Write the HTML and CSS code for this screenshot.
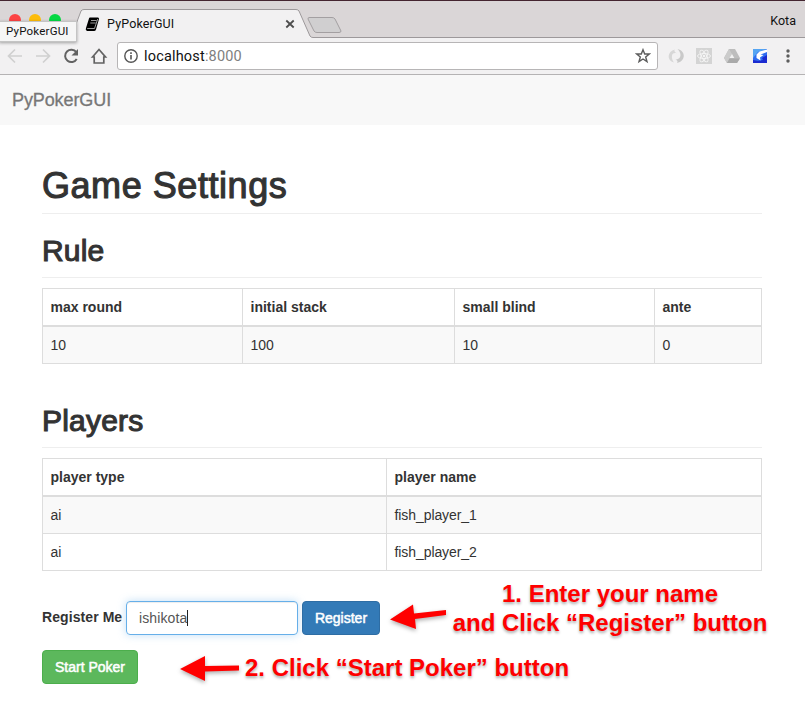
FILE: index.html
```html
<!DOCTYPE html>
<html lang="en">
<head>
<meta charset="utf-8">
<title>PyPokerGUI</title>
<link rel="stylesheet" href="styles.css">
</head>
<body>
<header class="browser">
  <div class="tabstrip">
    <svg class="tabshape" width="805" height="38" viewBox="0 0 805 38">
      <circle cx="15" cy="20" r="6" fill="#fc4344"/><circle cx="35" cy="20" r="6" fill="#fdbc0a"/><circle cx="55" cy="20" r="6" fill="#05d843"/>
      <path d="M0 37.5H71L81 11Q82 9.5 84 9.5H296Q298 9.5 299 11L310 36Q311 37.5 313 37.5H805V39H0Z" fill="#f2f1f2" stroke="#9d999b"/>
      <path d="M309 17.500H332Q334 17.500 335 19L341 31Q341 32.500 339 32.500H317Q315 32.500 314 31L308 19Q308 17.500 309 17.500Z" fill="#d0cfd0" stroke="#a39fa1"/>
      <g transform="translate(85 17)"><path d="M5 .5H13Q14 .5 14 2L11 12.500Q10.500 14 9 14H2Q0 13 1 11L4 1.500Q4.200.5 5 .5Z" fill="#000"/><path d="M6 3.500H11.500M5.300 6H10.700M2.200 11.500H9.500L12.700 2" stroke="#ddd" stroke-width=".7" fill="none"/></g>
      <path d="M286.300 20.500L293.700 27.500M293.700 20.500L286.300 27.500" stroke="#4d4d4d" stroke-width="1.800"/>
    </svg>
    <span class="tab-title">PyPokerGUI</span>
    <span class="profile">Kota</span>
    <span class="tooltip">PyPokerGUI</span>
  </div>
  <div class="toolbar">
    <svg class="nav-icons" width="117" height="36" viewBox="0 38 117 36" fill="none">
      <path d="M22 56H9M15 49.500L8.500 56L15 62.500M36 56H49M43 49.500L49.500 56L43 62.500" stroke="#d0d0d0" stroke-width="1.700"/>
      <path d="M76.300 52.200A6.200 6.200 0 1 0 76.700 59" stroke="#626262" stroke-width="2"/><path d="M78 49V55.500H71.500Z" fill="#626262"/>
      <path d="M92.500 57L99 49.500L105.500 57H103.800V63H94.200V57Z" stroke="#626262" stroke-width="1.700"/>
    </svg>
    <div class="address">
      <svg width="14" height="14" viewBox="0 0 14 14" fill="none"><circle cx="7" cy="7" r="6.200" stroke="#555" stroke-width="1.400"/><path d="M7 6V10.500M7 3.300V5" stroke="#555" stroke-width="1.600"/></svg>
      <span class="url">localhost<span class="port">:8000</span></span>
      <svg class="star" width="16" height="16" viewBox="0 0 16 16"><path d="M8 1.700L9.700 6H14.300L10.700 9L12 13.700L8 11L4 13.700L5.300 9L1.700 6H6.300Z" fill="none" stroke="#5d5d5d" stroke-width="1.400"/></svg>
    </div>
    <svg class="extensions" width="147" height="36" viewBox="658 38 147 36" fill="none">
      <path d="M675 49.500C667 51 666.500 61 674 62.500C672.500 60.500 671.500 58 672 55.500C672.500 53 675 52.500 677 53.500C674 51.500 674 50.500 675 49.500Z" fill="#d7d7d7"/><path d="M677.500 49C686 51 686 61 677 63C678 61.500 677.500 60.500 675.500 59.500C678 59.500 680.500 58 680.500 55C680.500 52.500 679 50.500 677.500 49Z" fill="#c9c9c9"/>
      <path d="M696 48H712V64H696Z" fill="#d4d4d4"/><g stroke="#f5f5f5" stroke-width=".9"><ellipse cx="704" cy="56" rx="6.500" ry="2.500"/><ellipse cx="704" cy="56" rx="6.500" ry="2.500" transform="rotate(60 704 56)"/><ellipse cx="704" cy="56" rx="6.500" ry="2.500" transform="rotate(120 704 56)"/></g><circle cx="704" cy="56" r="1.200" fill="#f5f5f5"/>
      <path d="M729 49H735L740 58L737 63H727L724 58Z" fill="#bdbdbd"/><path d="M729 49L732 54L727 63L724 58Z" fill="#cbcbcb"/><path d="M729.500 58L732 54L734.300 58Z" fill="#f2f2f2"/><path d="M729.500 58.500H740L737 63H727Z" fill="#aaa"/>
      <path d="M753 49H767V63H753Z" fill="#2f6cf0"/><path d="M753 49H767L758 52L753 58Z" fill="#55a5f2"/><path d="M753 60L758 61L763 60L762 58L767 55V63H753Z" fill="#1b2bd0"/><path d="M767 49.500L759.500 51.500L756.500 54.500V58L760.500 60.500L760 57.500L763.500 55L760.500 54.500L767 52Z" fill="#fff"/>
      <g fill="#5d5d5d"><circle cx="788" cy="51" r="1.700"/><circle cx="788" cy="56" r="1.700"/><circle cx="788" cy="61" r="1.700"/></g>
    </svg>
  </div>
</header>
<nav class="navbar"><span class="brand">PyPokerGUI</span></nav>
<main class="container">
  <h1><span>Game Settings</span></h1>
  <section>
    <h2><span>Rule</span></h2>
    <table class="rules">
      <colgroup><col class="c1"><col class="c2"><col class="c3"><col></colgroup>
      <thead><tr><th>max round</th><th>initial stack</th><th>small blind</th><th>ante</th></tr></thead>
      <tbody><tr><td>10</td><td>100</td><td>10</td><td>0</td></tr></tbody>
    </table>
  </section>
  <section class="players">
    <h2><span>Players</span></h2>
    <table>
      <colgroup><col class="p1"><col></colgroup>
      <thead><tr><th>player type</th><th>player name</th></tr></thead>
      <tbody><tr><td>ai</td><td>fish_player_1</td></tr><tr><td>ai</td><td>fish_player_2</td></tr></tbody>
    </table>
  </section>
  <form class="register">
    <label>Register Me</label>
    <div class="field"><span>ishikota</span><i class="caret"></i></div>
    <button type="button" class="btn primary">Register</button>
  </form>
  <button type="button" class="btn success">Start Poker</button>
</main>
<svg class="arrows" width="280" height="110" viewBox="170 590 280 110" fill="#f00">
  <path d="M390 619.500L413 604.500L414 613.500L446 610V615L415 619L416 629Z"/>
  <path d="M180 669L205 656V666L239 665.500V670.500L205 671.500V681Z"/>
</svg>
<div class="note note-one">1. Enter your name<br>and Click “Register” button</div>
<div class="note note-two">2. Click “Start Poker” button</div>
</body>
</html>
```
FILE: styles.css
```css
* { box-sizing: border-box; }
body { margin: 0; width: 805px; height: 723px; overflow: hidden; position: relative; background: #fff; color: #333; font: 14px/20px "Liberation Sans", Arial, sans-serif; }
.browser { height: 75px; background: #f2f1f2; border-bottom: 1px solid #b5b3b4; }
.tabstrip { position: relative; height: 38px; display: flex; justify-content: space-between; padding: 0 9px 0 107px; border-top: 1px solid #442530; background: #dad6d7; color: #111; font: 12.5px/16px Roboto, sans-serif; }
.tabshape { position: absolute; left: 0; top: -1px; }
.tab-title { position: relative; margin-top: 15px; letter-spacing: .15px; }
.profile { position: relative; margin-top: 12px; }
.tooltip { position: absolute; left: -1px; top: 20px; width: 78px; height: 21px; padding-left: 6px; border: 1px solid #c4c4c4; background: #f6f6f6; box-shadow: 0 1px 3px #0005; font-size: 11.5px; line-height: 19px; z-index: 2; letter-spacing: .2px; }
.toolbar { height: 36px; display: flex; align-items: center; }
.address { width: 541px; height: 28px; display: flex; align-items: center; padding: 0 6px; border: 1px solid #b7b5b6; border-radius: 3px; background: #fff; }
.url { margin: 1px 0 0 6px; color: #111; font: 14.5px/20px Roboto, sans-serif; letter-spacing: .18px; }
.port { color: #808080; }
.star { margin-left: auto; }
.navbar { height: 50px; padding: 15px 12px; background: #f8f8f8; }
.brand { color: #777; font-size: 18px; letter-spacing: -.1px; -webkit-text-stroke: .3px; }
.container { width: 720px; margin-left: 42px; }
h1, h2 { margin: 0; font-weight: 400; border-bottom: 1px solid #eee; -webkit-text-stroke: 1.1px #333; }
h1 { height: 89px; padding-top: 41px; font-size: 36px; line-height: 40px; letter-spacing: .55px; }
h2 { height: 64px; padding-top: 20px; font-size: 30px; line-height: 33px; letter-spacing: .2px; margin-bottom: 10px; }
table { width: 720px; table-layout: fixed; border-collapse: collapse; }
.c1, .c3 { width: 200px; }
.c2 { width: 212px; }
.p1 { width: 344px; }
th, td { height: 37px; padding: 8px 7.5px; text-align: left; border: 1px solid #ddd; line-height: 20px; }
th { height: 37px; padding: 8px 7.5px 7px; border-bottom-width: 2px; }
tbody tr:nth-child(odd) { background: #f9f9f9; }
.players { margin-top: 20px; }
.players th { height: 38px; padding-bottom: 8px; }
.players td { letter-spacing: -.08px; }
.register { display: flex; align-items: center; height: 34px; margin: 30px 0 15px; }
label { width: 84px; padding-bottom: 2px; font-weight: 700; letter-spacing: .08px; }
.field { width: 172px; height: 34px; padding: 6px 12px; display: flex; align-items: center; color: #555; border: 1px solid #66afe9; border-radius: 4px; box-shadow: 0 0 8px #66afe966, inset 0 1px 1px #00000013; }
.field span { letter-spacing: .1px; }
.caret { width: 1px; height: 16px; background: #222; }
.btn { height: 34px; padding: 0; color: #fff; font: 14px/20px "Liberation Sans", Arial, sans-serif; border-radius: 4px; -webkit-text-stroke: .5px #fff; }
.primary { width: 78px; margin-left: 4px; border: 1px solid #2e6da4; background: #337ab7; }
.success { display: block; width: 96px; border: 1px solid #4cae4c; background: #5cb85c; }
.arrows { position: absolute; left: 170px; top: 590px; filter: drop-shadow(0 2px 2px #0005); }
.note { position: absolute; color: #f00; font-size: 24px; line-height: 29px; font-weight: 700; white-space: nowrap; text-align: center; text-shadow: 0 2px 3px #0005; }
.note-one { left: 440px; top: 579px; width: 340px; }
.note-two { left: 245px; top: 653px; }
```
